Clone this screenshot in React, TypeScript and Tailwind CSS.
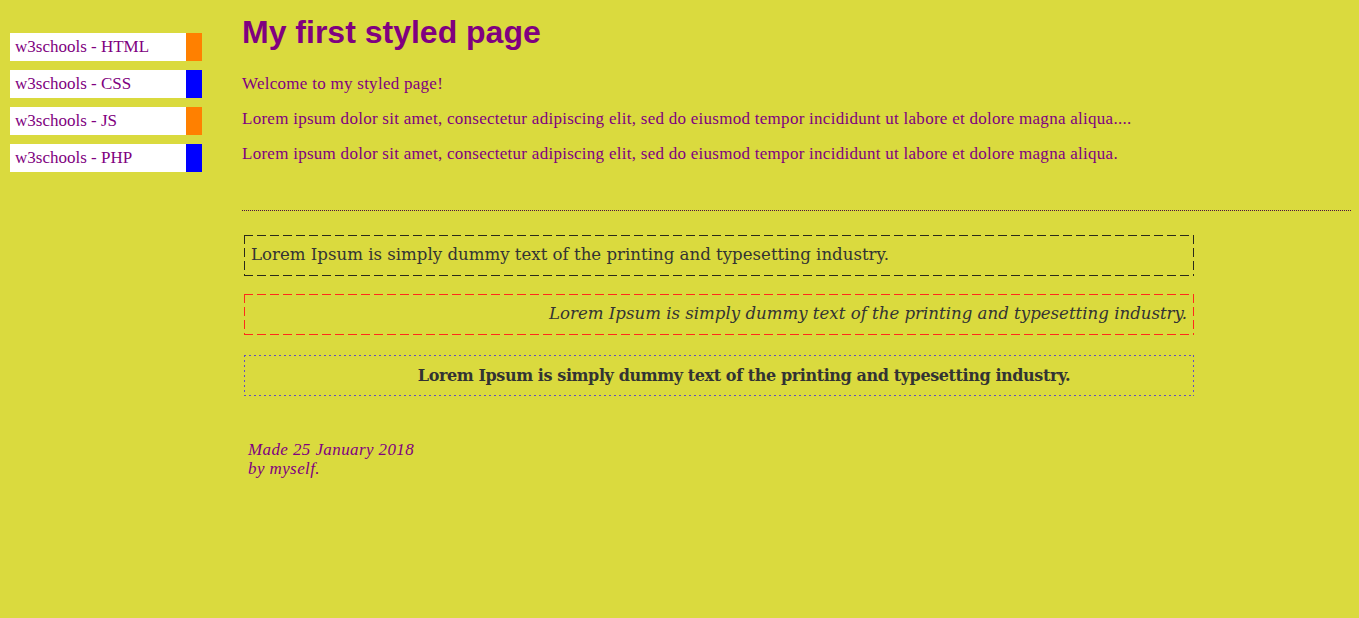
export default function App() {
  const nav = [
    { t: "w3schools - HTML", c: "border-r-[#ff8000]" },
    { t: "w3schools - CSS", c: "border-r-[#0000ff]" },
    { t: "w3schools - JS", c: "border-r-[#ff8000]" },
    { t: "w3schools - PHP", c: "border-r-[#0000ff]" },
  ];
  const lorem =
    "Lorem ipsum dolor sit amet, consectetur adipiscing elit, sed do eiusmod tempor incididunt ut labore et dolore magna aliqua.";
  const dummy = "Lorem Ipsum is simply dummy text of the printing and typesetting industry.";
  const frame =
    "[background-image:repeating-linear-gradient(90deg,var(--c)_0_var(--d),transparent_var(--d)_var(--p)),repeating-linear-gradient(90deg,var(--c)_0_var(--d),transparent_var(--d)_var(--p)),repeating-linear-gradient(180deg,var(--c)_0_var(--d),transparent_var(--d)_var(--p)),repeating-linear-gradient(180deg,var(--c)_0_var(--d),transparent_var(--d)_var(--p))] [background-size:100%_1px,100%_1px,1px_100%,1px_100%] [background-position:0_0,0_100%,0_0,100%_0] bg-no-repeat";
  return (
    <div className="min-h-[618px] w-full bg-[#dada3e] flex text-[#800080] [font-family:'Liberation_Serif',serif]">
      <div className="w-[242px] shrink-0 pl-[10px] pt-[33px] flex flex-col gap-[9px]">
        {nav.map((n) => (
          <div
            key={n.t}
            className={`w-[192px] h-[28px] bg-white border-r-[16px] ${n.c} pl-[5px] flex items-center text-[17px]`}
          >
            {n.t}
          </div>
        ))}
      </div>
      <div className="flex-1 pr-[8px]">
        <h1 className="mt-[14px] text-[32px] leading-[37px] font-bold [font-family:'Liberation_Sans',Arial,sans-serif]">
          My first styled page
        </h1>
        <p className="mt-[23px] text-[17px] leading-[19px] tracking-[0.27px]">Welcome to my styled page!</p>
        <p className="mt-[16px] text-[17px] leading-[19px] tracking-[0.27px]">{lorem}...</p>
        <p className="mt-[16px] text-[17px] leading-[19px] tracking-[0.27px]">{lorem}</p>
        <div className="mt-[47px] h-px bg-[repeating-linear-gradient(90deg,#4a1040_0_1px,transparent_1px_2px)]" />
        <div className="ml-[2px] w-[950px] mt-[24px] flex flex-col text-[#333333] [font-family:'DejaVu_Serif',serif]">
          <div
            className={`h-[41px] pl-[7px] flex items-center text-[16.6px] ${frame} [--c:#2a2a1a] [--d:9px] [--p:13px]`}
          >
            {dummy}
          </div>
          <div
            className={`mt-[18px] h-[41px] pr-[7px] flex items-center justify-end italic text-[16.6px] ${frame} [--c:#ff2a1a] [--d:9px] [--p:13px]`}
          >
            {dummy}
          </div>
          <div
            className={`mt-[20px] h-[41px] pl-[50px] flex items-center justify-center font-bold text-[16px] tracking-[-0.4px] ${frame} [--c:#6050c0] [--d:2px] [--p:5px]`}
          >
            {dummy}
          </div>
        </div>
        <div className="ml-[6px] mt-[44px] italic text-[17px] leading-[19px] tracking-[0.4px]">
          Made 25 January 2018
          <br />
          by myself.
        </div>
      </div>
    </div>
  );
}
